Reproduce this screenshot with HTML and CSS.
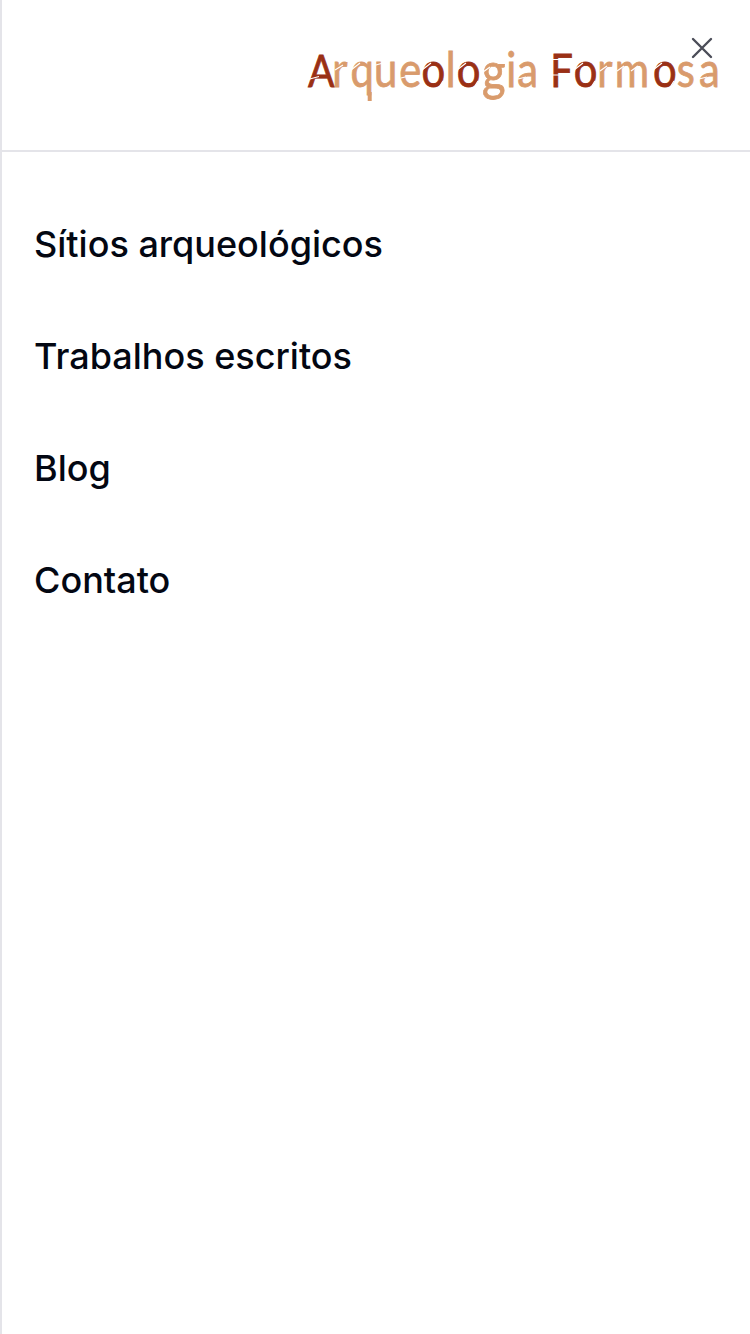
FILE: index.html
```html
<!DOCTYPE html>
<html lang="pt-BR">
<head>
<meta charset="utf-8">
<title>Arqueologia Formosa</title>
<link rel="stylesheet" href="styles.css">
</head>
<body>
<div class="drawer">
  <header class="header">
    <svg class="logo" viewBox="304 34 420 84" role="img" aria-label="Arqueologia Formosa">
      <g transform="scale(.87 1)">
        <text class="logo-text" y="87.3" x="354 382 403 430 459 484.500 512.5 525 554 582 594.500 620 632.5 659.500 686.5 706.500 750.5 778 803.5"><tspan class="dark cap-a">A</tspan>rque<tspan class="dark">o</tspan>l<tspan class="dark">o</tspan><tspan class="tail" dy="3">g</tspan><tspan dy="-3">i</tspan>a <tspan class="dark cap-f">F</tspan><tspan class="dark">o</tspan>rm<tspan class="dark">o</tspan>sa</text>
      </g>
      <path class="stem" d="M369.700 92v9"/>
      <path class="cuts" d="M308 79.500l11-3M335 70l8-5M351 70l9-7M376 65l7-2M401 78l8-2M422 70l9-7M438 89l5-8M457 70l9-7M473 89l5-8M483 72l7-5M518 79l8-2M551 59.500h9M551 75h9M574 70l9-7M590 89l5-8M600 71l7-5M617 71l7-5M631 71l7-5M653 70l9-7M669 89l5-8M699 79l8-2"/>
    </svg>
    <button class="close" aria-label="Fechar">
      <svg class="close-icon" viewBox="0 0 22 22"><path d="M2 2l18 18M20 2L2 20"/></svg>
    </button>
  </header>
  <nav class="menu">
    <a class="item">Sítios arqueológicos</a>
    <a class="item">Trabalhos escritos</a>
    <a class="item">Blog</a>
    <a class="item">Contato</a>
  </nav>
</div>
</body>
</html>
```
FILE: styles.css
```css
body { margin: 0; background: #fff; }
.drawer {
  box-sizing: border-box;
  min-height: 1334px;
  border-left: 2px solid #e4e4e9;
  font-family: Inter, sans-serif;
  color: #030712;
}
.header {
  position: relative;
  box-sizing: border-box;
  display: flex;
  justify-content: flex-end;
  height: 152px;
  padding: 34px 26px 0 0;
  border-bottom: 2px solid #e4e4e9;
}
.logo { width: 420px; height: 84px; overflow: visible; }
.logo-text {
  font-family: Lato, sans-serif;
  font-size: 48px;
  fill: #d99b6c;
  stroke: #d99b6c;
  stroke-width: .8px;
}
.dark { fill: #9a3015; stroke: #9a3015; }
.cap-a { font-size: 45px; }
.cap-f { font-size: 46px; }
.tail { font-size: 52px; }
.stem { stroke: #d99b6c; stroke-width: 4px; }
.cuts { fill: none; stroke: #fff; stroke-width: 1.2px; }
.close {
  position: absolute;
  top: 37px;
  right: 37px;
  width: 22px;
  height: 22px;
  padding: 0;
  border: 0;
  background: none;
}
.close-icon { display: block; width: 22px; height: 22px; }
.close-icon path { fill: none; stroke: #4b4d58; stroke-width: 2.4px; stroke-linecap: round; }
.menu {
  display: flex;
  flex-direction: column;
  gap: 56px;
  padding: 64px 32px;
}
.item { font-size: 36px; font-weight: 500; line-height: 56px; }
```
